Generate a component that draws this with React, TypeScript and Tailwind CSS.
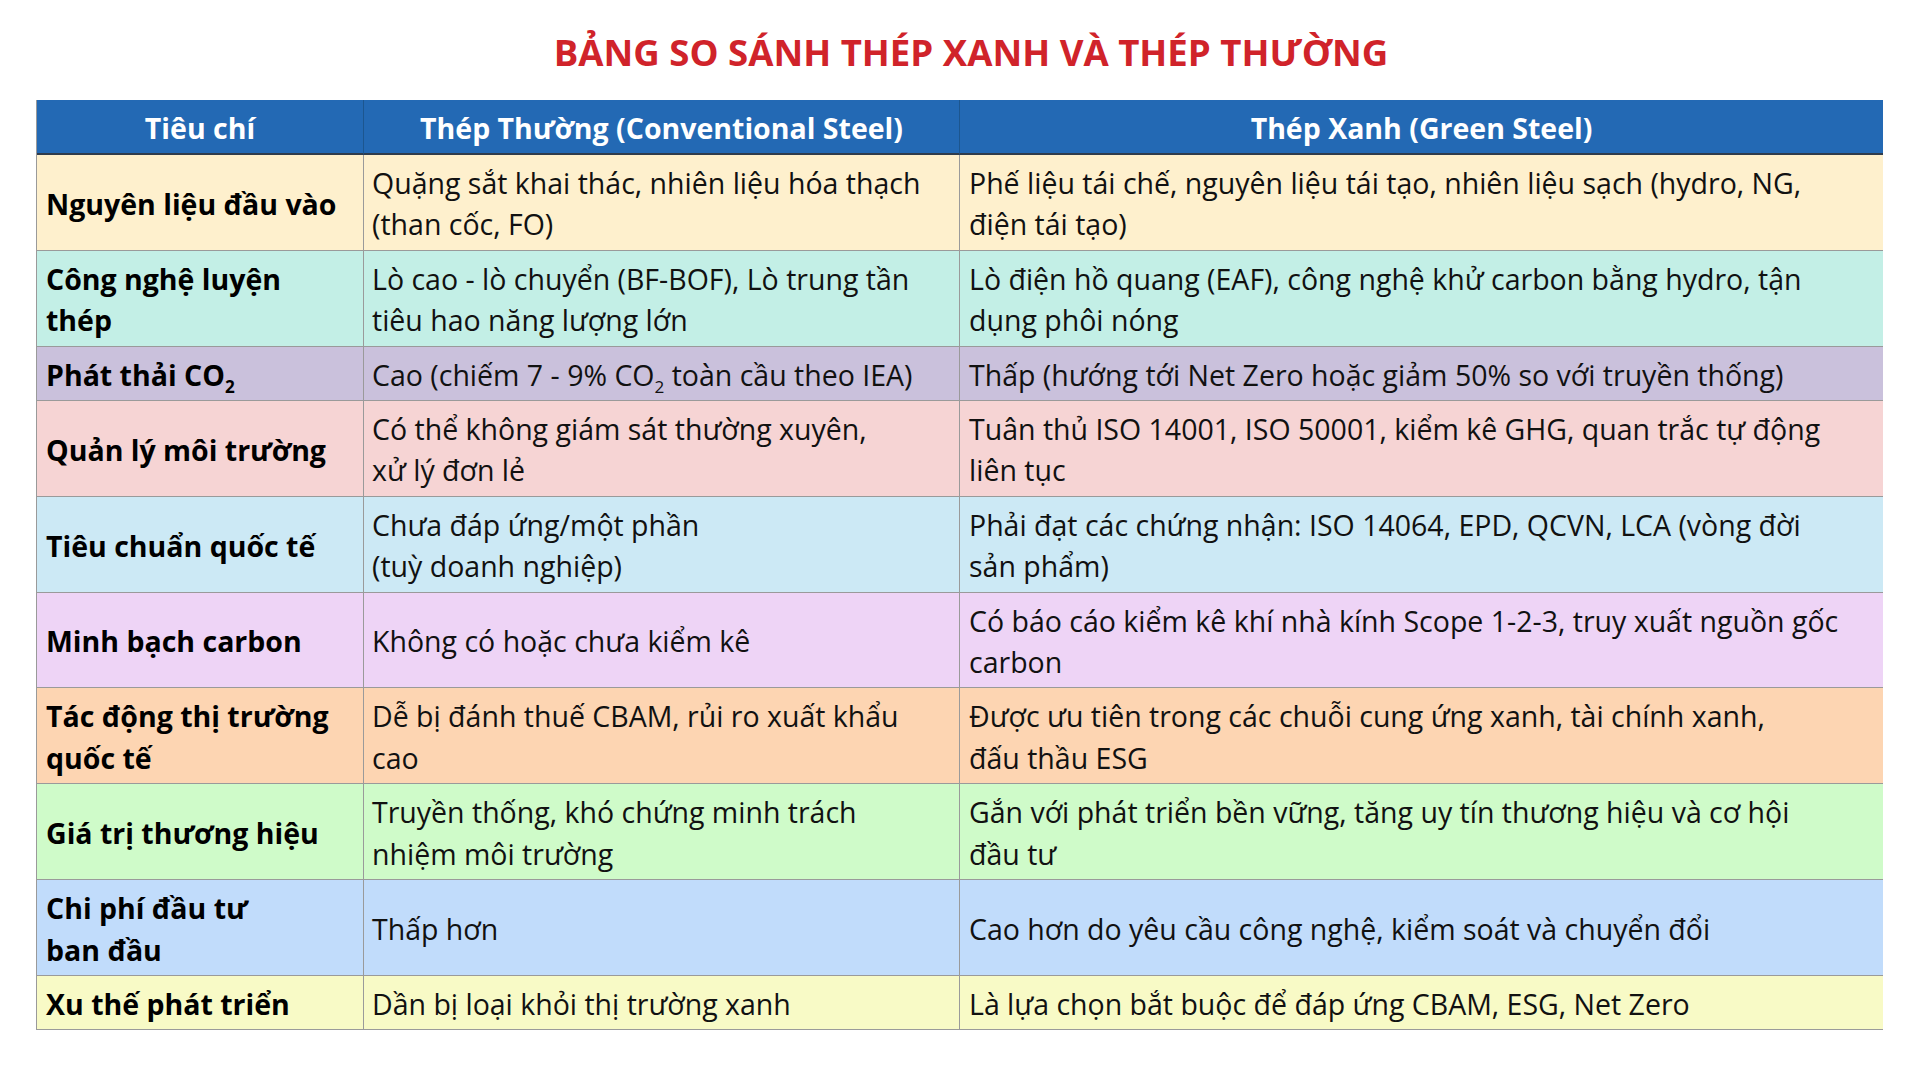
import type { ReactNode } from "react";

type Row = {
  label: ReactNode[];
  normal: ReactNode[];
  green: ReactNode[];
  bg: string;
};

const Sub = ({ children }: { children: ReactNode }) => (
  <sub className="text-[0.6em] -bottom-[0.45em]">{children}</sub>
);

const rows: Row[] = [
  {
    label: ["Nguyên liệu đầu vào"],
    normal: ["Quặng sắt khai thác, nhiên liệu hóa thạch", "(than cốc, FO)"],
    green: ["Phế liệu tái chế, nguyên liệu tái tạo, nhiên liệu sạch (hydro, NG,", "điện tái tạo)"],
    bg: "bg-[#fef0cd]",
  },
  {
    label: ["Công nghệ luyện", "thép"],
    normal: ["Lò cao - lò chuyển (BF-BOF), Lò trung tần", "tiêu hao năng lượng lớn"],
    green: ["Lò điện hồ quang (EAF), công nghệ khử carbon bằng hydro, tận", "dụng phôi nóng"],
    bg: "bg-[#c3efe6]",
  },
  {
    label: [
      <>
        Phát thải CO<Sub>2</Sub>
      </>,
    ],
    normal: [
      <>
        Cao (chiếm 7 - 9% CO<Sub>2</Sub> toàn cầu theo IEA)
      </>,
    ],
    green: ["Thấp (hướng tới Net Zero hoặc giảm 50% so với truyền thống)"],
    bg: "bg-[#cac1dc]",
  },
  {
    label: ["Quản lý môi trường"],
    normal: ["Có thể không giám sát thường xuyên,", "xử lý đơn lẻ"],
    green: ["Tuân thủ ISO 14001, ISO 50001, kiểm kê GHG, quan trắc tự động", "liên tục"],
    bg: "bg-[#f6d4d4]",
  },
  {
    label: ["Tiêu chuẩn quốc tế"],
    normal: ["Chưa đáp ứng/một phần", "(tuỳ doanh nghiệp)"],
    green: ["Phải đạt các chứng nhận: ISO 14064, EPD, QCVN, LCA (vòng đời", "sản phẩm)"],
    bg: "bg-[#cce9f5]",
  },
  {
    label: ["Minh bạch carbon"],
    normal: ["Không có hoặc chưa kiểm kê"],
    green: ["Có báo cáo kiểm kê khí nhà kính Scope 1-2-3, truy xuất nguồn gốc", "carbon"],
    bg: "bg-[#eed4f6]",
  },
  {
    label: ["Tác động thị trường", "quốc tế"],
    normal: ["Dễ bị đánh thuế CBAM, rủi ro xuất khẩu", "cao"],
    green: ["Được ưu tiên trong các chuỗi cung ứng xanh, tài chính xanh,", "đấu thầu ESG"],
    bg: "bg-[#fdd5b2]",
  },
  {
    label: ["Giá trị thương hiệu"],
    normal: ["Truyền thống, khó chứng minh trách", "nhiệm môi trường"],
    green: ["Gắn với phát triển bền vững, tăng uy tín thương hiệu và cơ hội", "đầu tư"],
    bg: "bg-[#cffbc9]",
  },
  {
    label: ["Chi phí đầu tư", "ban đầu"],
    normal: ["Thấp hơn"],
    green: ["Cao hơn do yêu cầu công nghệ, kiểm soát và chuyển đổi"],
    bg: "bg-[#c1dcfb]",
  },
  {
    label: ["Xu thế phát triển"],
    normal: ["Dần bị loại khỏi thị trường xanh"],
    green: ["Là lựa chọn bắt buộc để đáp ứng CBAM, ESG, Net Zero"],
    bg: "bg-[#f8fac6]",
  },
];

function Lines({ lines }: { lines: ReactNode[] }) {
  return (
    <div className="whitespace-nowrap">
      {lines.map((l, i) => (
        <div key={i}>{l}</div>
      ))}
    </div>
  );
}

export default function App() {
  return (
    <div className="min-h-screen bg-white font-['Open_Sans','Noto_Sans',sans-serif] text-[#111]">
      {/* Title */}
      <div className="pt-[34px] pb-[29px] pl-[22px] text-center text-[36.6px] leading-[37px] font-bold text-[#d0232a]">
        BẢNG SO SÁNH THÉP XANH VÀ THÉP THƯỜNG
      </div>

      <div className="ml-[36px] w-[1847px] border-l border-[#9a9a9a] grid grid-cols-[327px_596px_923px]">
        {/* Header */}
        <div className="h-[55px] pt-[4px] flex items-center justify-center bg-[#2369b4] border-r border-b-2 border-r-[#1c568f] border-b-[#2f3c4c] text-white text-[28.5px] font-bold">
          Tiêu chí
        </div>
        <div className="h-[55px] pt-[4px] flex items-center justify-center bg-[#2369b4] border-r border-b-2 border-r-[#1c568f] border-b-[#2f3c4c] text-white text-[28.5px] font-bold">
          Thép Thường (Conventional Steel)
        </div>
        <div className="h-[55px] pt-[4px] flex items-center justify-center bg-[#2369b4] border-b-2 border-b-[#2f3c4c] text-white text-[28.5px] font-bold">
          Thép Xanh (Green Steel)
        </div>

        {/* Body rows */}
        {rows.map((r, i) => (
          <div key={i} className="contents">
            <div className={`${r.bg} flex items-center px-[9px] pt-[8px] pb-[4px] border-r border-b border-[#9a9a9a] text-[28.5px] leading-[41.4px] font-bold text-black`}>
              <Lines lines={r.label} />
            </div>
            <div className={`${r.bg} flex items-center px-[8px] pt-[8px] pb-[4px] border-r border-b border-[#9a9a9a] text-[28.5px] leading-[41.4px]`}>
              <Lines lines={r.normal} />
            </div>
            <div className={`${r.bg} flex items-center px-[9px] pt-[8px] pb-[4px] border-b border-[#9a9a9a] text-[28.5px] leading-[41.4px]`}>
              <Lines lines={r.green} />
            </div>
          </div>
        ))}
      </div>
    </div>
  );
}
